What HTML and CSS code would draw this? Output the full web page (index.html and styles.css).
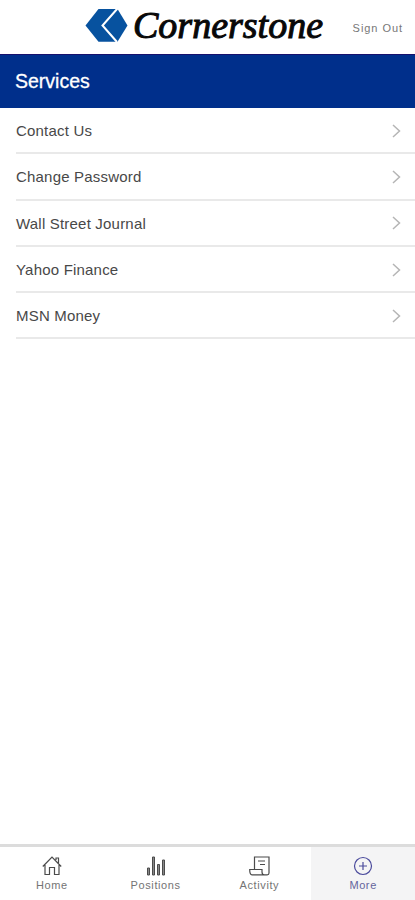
FILE: index.html
```html
<!DOCTYPE html>
<html lang="en">
<head>
<meta charset="utf-8">
<title>Services</title>
<link rel="stylesheet" href="styles.css">
</head>
<body>
<header class="header">
  <svg class="logo" width="240" height="50" viewBox="0 0 240 50" role="img" aria-label="Cornerstone">
    <path class="logo-mark" d="M.5 25.500 13.500 9H32.500L42.500 25.500 32.500 41.800H13.500Z"/>
    <path class="logo-cut" d="M32.500 8.500 17.500 25.500 32 42"/>
    <text class="logo-text" x="48" y="38" textLength="190" lengthAdjust="spacingAndGlyphs">Cornerstone</text>
  </svg>
  <a class="sign-out">Sign Out</a>
</header>
<h1 class="title">Services</h1>
<main class="list">
  <a class="row"><span>Contact Us</span><svg class="chevron" viewBox="0 0 9 14"><path d="M1 1 7.500 7 1 13"/></svg></a>
  <a class="row"><span>Change Password</span><svg class="chevron" viewBox="0 0 9 14"><path d="M1 1 7.500 7 1 13"/></svg></a>
  <a class="row"><span>Wall Street Journal</span><svg class="chevron" viewBox="0 0 9 14"><path d="M1 1 7.500 7 1 13"/></svg></a>
  <a class="row"><span>Yahoo Finance</span><svg class="chevron" viewBox="0 0 9 14"><path d="M1 1 7.500 7 1 13"/></svg></a>
  <a class="row"><span>MSN Money</span><svg class="chevron" viewBox="0 0 9 14"><path d="M1 1 7.500 7 1 13"/></svg></a>
</main>
<nav class="tabs">
  <a class="tab"><svg class="icon" viewBox="0 0 22 22"><path d="M1.800 11.500 11 2l9.200 9.500M4 10v9.500h4.500v-7h5v7H18V10M15 5V3h2.500v5"/></svg><span>Home</span></a>
  <a class="tab"><svg class="icon bars" viewBox="0 0 22 22"><path d="M2.500 13h2v7h-2zM7.500 2h2v18h-2zM12.500 9.500h2V20h-2zM17.500 5h2v15h-2z"/></svg><span>Positions</span></a>
  <a class="tab"><svg class="icon" viewBox="0 0 22 22"><path d="M6.500 14V2H21v16c0 1-.8 1.800-1.800 1.800H4c-1.500 0-2.300-1.500-2.300-5.300H14V17c0 1.800.8 2.800 2.500 2.800M10 6h7M12 9.500h5"/></svg><span>Activity</span></a>
  <a class="tab active"><svg class="icon" viewBox="0 0 22 22"><circle cx="11" cy="11" r="8.500"/><path d="M11 7v8M7 11h8"/></svg><span>More</span></a>
</nav>
</body>
</html>
```
FILE: styles.css
```css
* { box-sizing: border-box; }
body {
  margin: 0;
  height: 900px;
  display: flex;
  flex-direction: column;
  overflow: hidden;
  background: #fff;
  color: #484848;
  font-family: "Liberation Sans", Arial, sans-serif;
}
.header {
  height: 54px;
  flex: none;
  display: flex;
  justify-content: space-between;
  padding: 0 12px 0 85px;
}
.logo { flex: none; }
.logo-mark { fill: #07529f; }
.logo-cut { fill: none; stroke: #fff; stroke-width: 2; }
.logo-text {
  font: italic 37px "Liberation Serif", "Times New Roman", serif;
  fill: #080808;
  stroke: #080808;
  stroke-width: 1;
}
.sign-out {
  margin-top: 21px;
  font-size: 11px;
  line-height: 14px;
  letter-spacing: .95px;
  color: #777;
  white-space: nowrap;
}
.title {
  margin: 0;
  height: 54px;
  flex: none;
  padding: 0 15px;
  border-top: 1px solid #17106c;
  background: #002f8b;
  color: #fff;
  font-size: 19.500px;
  font-weight: 400;
  line-height: 53px;
  -webkit-text-stroke: .3px #fff;
}
.list {
  flex: 1;
  padding: 0 0 0 16px;
}
.row {
  height: 46.300px;
  display: flex;
  align-items: center;
  justify-content: space-between;
  padding-right: 14px;
  padding-top: 1px;
  border-bottom: 2px solid #e9e9e9;
  font-size: 15px;
  letter-spacing: .2px;
}
.chevron {
  width: 9px;
  height: 14px;
  fill: none;
  stroke: #b5b5b5;
  stroke-width: 1.500;
}
.tabs {
  height: 56px;
  flex: none;
  display: grid;
  grid-template-columns: repeat(4, 1fr);
  border-top: 3px solid #dcdcdc;
}
.tab {
  display: flex;
  flex-direction: column;
  align-items: center;
  padding-top: 8px;
  color: #747474;
  font-size: 11px;
  line-height: 14px;
  letter-spacing: .6px;
}
.icon {
  width: 22px;
  height: 22px;
  margin-bottom: 1px;
  fill: none;
  stroke: #4b4b4b;
  stroke-width: 1.200;
}
.bars { fill: #888; stroke-width: 1; }
.active { background: #f4f4f5; color: #65659c; }
.active .icon { stroke: #4a4a9c; }
```
